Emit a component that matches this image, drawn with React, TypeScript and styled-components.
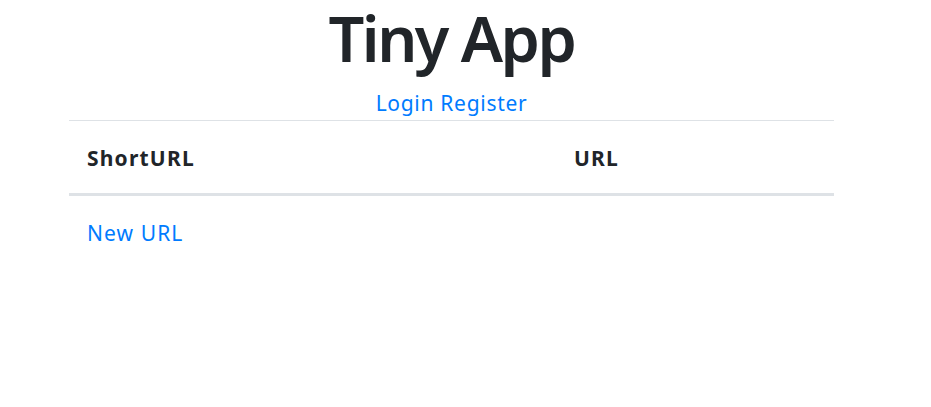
import React from "react";
import styled, { createGlobalStyle } from "styled-components";

const Global = createGlobalStyle`
  html, body { margin: 0; padding: 0; background: #fff; }
  body { font-family: "Noto Sans", "Open Sans", sans-serif; color: #212529; }
`;

const Page = styled.div`
  width: 765px;
  margin-left: 69px;
`;

const Title = styled.h1`
  margin: 0;
  padding: 0 4px;
  font-size: 63px;
  line-height: 76px;
  font-weight: 600;
  letter-spacing: -2.5px;
  text-align: center;
  color: #212529;
`;

const Nav = styled.nav`
  margin-top: 17px;
  font-size: 21px;
  line-height: 21px;
  letter-spacing: 0.7px;
  text-align: center;
`;

const Link = styled.a`
  color: #007bff;
  text-decoration: none;
`;

const Table = styled.div`
  margin-top: 6px;
  border-top: 1px solid #dee2e6;
`;

const HeadRow = styled.div`
  display: grid;
  grid-template-columns: 487px 1fr;
  border-bottom: 3px solid #dee2e6;
`;

const HeadCell = styled.div`
  padding: 27px 18px 24px;
  font-size: 21px;
  line-height: 21px;
  font-weight: 700;
  letter-spacing: 1.2px;
`;

const Footer = styled.div`
  padding: 27px 18px 0;
  font-size: 21px;
  line-height: 21px;
  letter-spacing: 1.1px;
`;

export default function App() {
  return (
    <>
      <Global />
      <Page>
        <Title>Tiny App</Title>
        <Nav>
          <Link href="#">Login</Link> <Link href="#">Register</Link>
        </Nav>
        <Table>
          <HeadRow>
            <HeadCell>ShortURL</HeadCell>
            <HeadCell>URL</HeadCell>
          </HeadRow>
        </Table>
        <Footer>
          <Link href="#">New URL</Link>
        </Footer>
      </Page>
    </>
  );
}
